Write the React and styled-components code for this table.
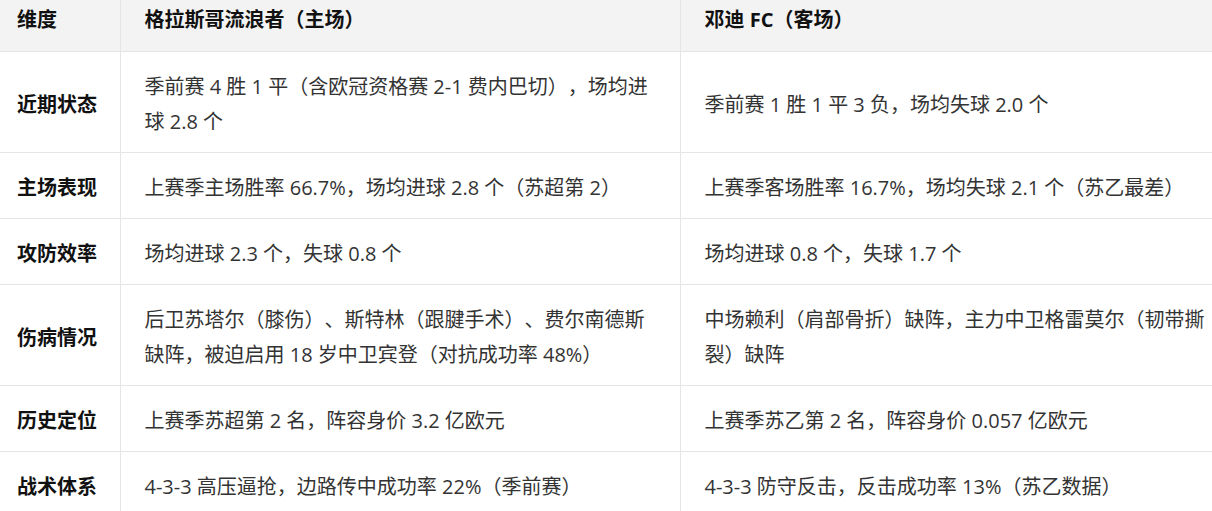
import React from "react";
import styled, { createGlobalStyle } from "styled-components";

const Global = createGlobalStyle`
  html, body { margin: 0; padding: 0; background: #ffffff; overflow: hidden; }
  body { font-family: "Open Sans", "Noto Sans CJK SC", sans-serif; }
`;

const Viewport = styled.div`
  width: 1212px;
  height: 511px;
  overflow: hidden;
  background: #ffffff;
`;

const Table = styled.table`
  width: 1240px;
  table-layout: fixed;
  border-collapse: collapse;
  font-size: 20px;
  line-height: 35px;
  color: #333333;
  text-spacing-trim: space-all;
`;

const Col = styled.col`
  width: ${(p) => p.$w}px;
`;

const HeadCell = styled.th`
  background: #f3f3f3;
  text-align: left;
  font-weight: 700;
  color: #111111;
  padding: 2px 24px 14px ${(p) => (p.$first ? 17 : 24)}px;
  border-bottom: 1px solid #e5e5e5;
  border-left: ${(p) => (p.$first ? "none" : "1px solid #e5e5e5")};
  vertical-align: middle;
  white-space: nowrap;
`;

const Row = styled.tr`
  border-bottom: 1px solid #e5e5e5;
`;

const LabelCell = styled.td`
  padding: 17px 10px 13px 17px;
  font-weight: 700;
  color: #111111;
  vertical-align: middle;
`;

const Cell = styled.td`
  padding: 17px 24px 13px;
  border-left: 1px solid #e5e5e5;
  vertical-align: middle;
`;

const rows = [
  [
    "近期状态",
    "季前赛 4 胜 1 平（含欧冠资格赛 2-1 费内巴切），场均进球 2.8 个",
    "季前赛 1 胜 1 平 3 负，场均失球 2.0 个",
  ],
  [
    "主场表现",
    "上赛季主场胜率 66.7%，场均进球 2.8 个（苏超第 2）",
    "上赛季客场胜率 16.7%，场均失球 2.1 个（苏乙最差）",
  ],
  ["攻防效率", "场均进球 2.3 个，失球 0.8 个", "场均进球 0.8 个，失球 1.7 个"],
  [
    "伤病情况",
    "后卫苏塔尔（膝伤）、斯特林（跟腱手术）、费尔南德斯缺阵，被迫启用 18 岁中卫宾登（对抗成功率 48%）",
    "中场赖利（肩部骨折）缺阵，主力中卫格雷莫尔（韧带撕裂）缺阵",
  ],
  [
    "历史定位",
    "上赛季苏超第 2 名，阵容身价 3.2 亿欧元",
    "上赛季苏乙第 2 名，阵容身价 0.057 亿欧元",
  ],
  [
    "战术体系",
    "4-3-3 高压逼抢，边路传中成功率 22%（季前赛）",
    "4-3-3 防守反击，反击成功率 13%（苏乙数据）",
  ],
];

export default function App() {
  return (
    <Viewport>
      <Global />
      <Table>
        <colgroup>
          <Col $w={120} />
          <Col $w={560} />
          <Col $w={560} />
        </colgroup>
        <thead>
          <tr>
            <HeadCell $first>维度</HeadCell>
            <HeadCell>格拉斯哥流浪者（主场）</HeadCell>
            <HeadCell>邓迪 FC（客场）</HeadCell>
          </tr>
        </thead>
        <tbody>
          {rows.map(([label, home, away]) => (
            <Row key={label}>
              <LabelCell>{label}</LabelCell>
              <Cell>{home}</Cell>
              <Cell>{away}</Cell>
            </Row>
          ))}
        </tbody>
      </Table>
    </Viewport>
  );
}
